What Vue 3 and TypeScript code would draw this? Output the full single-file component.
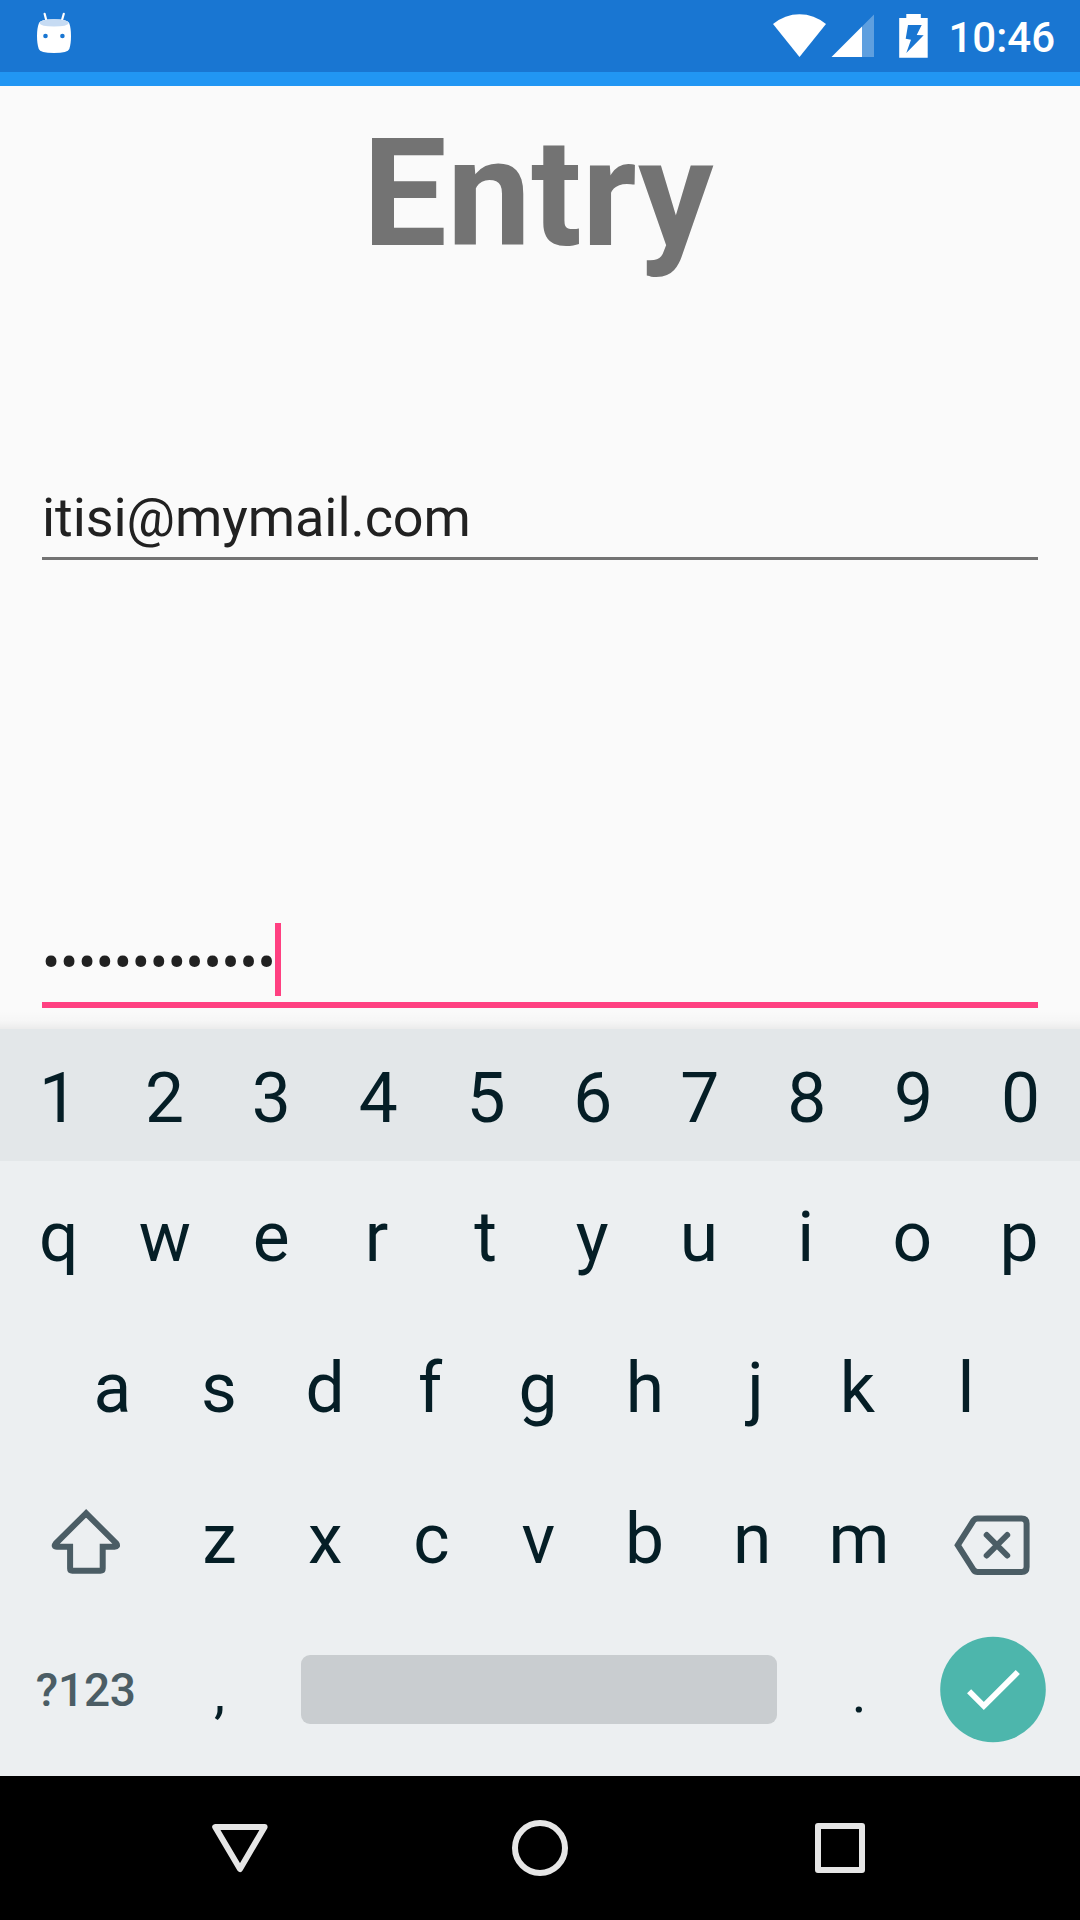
<script setup lang="ts">
const digits: string[] = [...'1234567890']
const topRow: string[] = [...'qwertyuiop']
const homeRow: string[] = [...'asdfghjkl']
const bottomRow: string[] = [...'zxcvbnm']
const email = 'itisi@mymail.com'
const masked: string = '•'.repeat(13)

const optical: Record<string, number> = {
  '2': -0.9, '3': -0.9, '4': -0.8,
  w: -0.7, e: -1, r: -2.3,
  d: -0.5, f: -2.2, g: -1.1, h: -1, j: 3.2, k: -1.7,
  x: -1, c: -1.5, v: -1.2, b: -1.7, n: -0.6, m: -0.6,
}

function labelStyle(label: string): { transform: string } | undefined {
  const dx = optical[label]
  return dx === undefined ? undefined : { transform: `translateX(${dx}px)` }
}
</script>

<template>
  <div class="screen">
    <header class="status">
      <svg class="droid" width="36" height="44" viewBox="36 12 36 44">
        <path d="M44.6 13.8L46.6 21.5M63.8 13.8L61.6 21.5" stroke="#fff" stroke-width="2.2" stroke-linecap="round" />
        <path d="M39 23Q40 19.2 54 19.2T69.200 23Q71 28 71 36Q71 44 69.300 49Q68 52.900 54 52.900T38.800 49Q37 44 37 36Q37 28 39 23Z" fill="#fff" />
        <path d="M39.300 23Q40.500 19.200 54 19.200T68.900 23Q67.500 26.500 54 26.500T39.300 23Z" fill="#c6dbf3" />
        <circle cx="45.500" cy="36" r="2.300" fill="#1976d2" />
        <circle cx="62.400" cy="36" r="2.300" fill="#1976d2" />
      </svg>
      <svg class="indicators" width="160" height="50" viewBox="770 10 160 50">
        <path d="M773 24Q785 14.200 799.500 14.200T826 24L799.500 57Z" fill="#fff" />
        <path d="M831.500 57L862 26.500V57Z" fill="#fff" />
        <path d="M862 26.500L874 14.500V57H862Z" fill="#fff" fill-opacity=".3" />
        <path fill-rule="evenodd" d="M906.300 14H920.800V18H927.700V57.700H899.200V18H906.300ZM908 25L905.700 38.700L911 39.700L906.300 53L923.700 35.300L916.700 35L921.700 25Z" fill="#fff" />
      </svg>
      <span class="clock">10:46</span>
    </header>
    <div class="action-strip"></div>

    <main class="content">
      <h1 class="title">Entry</h1>
      <div class="field email">{{ email }}</div>
      <div class="field password">
        <span class="dots">{{ masked }}</span><i class="caret"></i>
      </div>
      <div class="shade"></div>
    </main>

    <section class="keyboard">
      <div class="row numbers">
        <span v-for="k in digits" :key="k" class="key" :style="labelStyle(k)">{{ k }}</span>
      </div>
      <div class="row">
        <span v-for="k in topRow" :key="k" class="key" :style="labelStyle(k)">{{ k }}</span>
      </div>
      <div class="row home">
        <span v-for="k in homeRow" :key="k" class="key" :style="labelStyle(k)">{{ k }}</span>
      </div>
      <div class="row">
        <span class="key wide">
          <svg width="160" height="80" viewBox="6 1499 160 80" fill="none" stroke="#4b5d65" stroke-width="6">
            <path d="M86.100 1513.300L55.700 1543.500Q53.200 1546.700 57 1546.700H70.100V1568.500Q70.100 1570.700 72.300 1570.700H100.500Q102.700 1570.700 102.700 1568.500V1546.700H114.600Q118.400 1546.700 116.300 1543.500Z" />
          </svg>
        </span>
        <span v-for="k in bottomRow" :key="k" class="key" :style="labelStyle(k)">{{ k }}</span>
        <span class="key wide">
          <svg width="160" height="80" viewBox="913 1499 160 80" fill="none" stroke="#4b5d65" stroke-width="6">
            <path d="M957.800 1545.200L973.500 1520.500Q975 1518.400 977.500 1518.400H1021.600Q1026.600 1518.400 1026.600 1523.400V1566.900Q1026.600 1571.900 1021.600 1571.900H977.500Q975 1571.900 973.500 1569.900Z" />
            <path d="M986.700 1535L1007.200 1555.500M1007.200 1535L986.700 1555.500" stroke-linecap="round" />
          </svg>
        </span>
      </div>
      <div class="row last">
        <span class="key wide mode">?123</span>
        <span class="key mark">,</span>
        <span class="space"></span>
        <span class="key mark">.</span>
        <span class="key wide">
          <svg width="160" height="110" viewBox="913 1634.500 160 110">
            <circle cx="993" cy="1689" r="52.800" fill="#4db6ac" />
            <path d="M969.100 1690.800L983.800 1705.500L1017.800 1671.500" fill="none" stroke="#fff" stroke-width="5.800" />
          </svg>
        </span>
      </div>
    </section>

    <nav class="navbar">
      <svg width="60" height="60" viewBox="210 1818 60 60" fill="none" stroke="#e6e6e6" stroke-width="6" stroke-linejoin="round">
        <path d="M215.200 1827H264.600L240 1869Z" />
      </svg>
      <svg width="60" height="60" viewBox="510 1818 60 60" fill="none" stroke="#e6e6e6" stroke-width="6">
        <circle cx="540" cy="1848" r="25" />
      </svg>
      <svg width="60" height="60" viewBox="810 1818 60 60" fill="none" stroke="#e6e6e6" stroke-width="6" stroke-linejoin="round">
        <rect x="818" y="1826" width="44" height="44" />
      </svg>
    </nav>
  </div>
</template>

<style>
body {
  margin: 0;
}
</style>

<style scoped>
.screen {
  width: 1080px;
  height: 1920px;
  display: flex;
  flex-direction: column;
  overflow: hidden;
  background: #fafafa;
  font-family: Roboto, "Liberation Sans", sans-serif;
}

svg {
  display: block;
  flex: none;
}

.status {
  height: 72px;
  display: flex;
  align-items: flex-start;
  background: #1976d2;
  color: #fff;
}

.droid {
  margin: 12px 0 0 36px;
}

.indicators {
  margin: 10px 0 0 auto;
}

.clock {
  width: 150px;
  margin-top: 13px;
  padding-right: 25px;
  font-size: 42px;
  font-weight: 500;
  line-height: 49px;
  white-space: nowrap;
  text-align: right;
  box-sizing: border-box;
}

.action-strip {
  height: 14px;
  background: #2196f3;
}

.content {
  height: 943px;
  display: flex;
  flex-direction: column;
}

.title {
  margin: 20px 0 0;
  padding-right: 4px;
  height: 176px;
  font-size: 150px;
  line-height: 176px;
  font-weight: 700;
  color: #737373;
  text-align: center;
}

.field {
  margin: 0 42px;
  font-size: 54px;
  line-height: 63px;
  color: #212121;
  white-space: nowrap;
}

.email {
  margin-top: 204px;
  height: 71px;
  letter-spacing: -0.07px;
  border-bottom: 3px solid #737373;
}

.password {
  margin-top: 363px;
  height: 79px;
  border-bottom: 6px solid #ff4081;
  display: flex;
}

.dots {
  width: 233px;
  line-height: 79px;
  letter-spacing: -0.27px;
}

.caret {
  width: 6px;
  height: 73px;
  background: #ff4081;
}

.shade {
  margin-top: auto;
  height: 18px;
  background: linear-gradient(rgba(0, 0, 0, 0), rgba(0, 0, 0, 0.015) 55%, rgba(0, 0, 0, 0.06));
}

.keyboard {
  height: 747px;
  background: #eceff1;
  color: #051e26;
}

.row {
  height: 151px;
  padding: 0 5.5px;
  display: flex;
  align-items: center;
  box-sizing: border-box;
}

.numbers {
  height: 132px;
  padding: 5px 5px 0;
  background: #e3e7e9;
}

.home {
  padding: 0 59px;
}

.key {
  width: 106.7px;
  padding-top: 2px;
  flex: none;
  display: flex;
  justify-content: center;
  font-size: 69.5px;
  line-height: 82px;
}

.numbers .key {
  width: 106.9px;
}

.wide {
  width: 160.65px;
  padding-top: 0;
}

.mode {
  padding-top: 1px;
  font-size: 46px;
  font-weight: 500;
  letter-spacing: -0.2px;
  color: #4b5d65;
}

.mark {
  font-size: 56px;
  padding-top: 7px;
}

.space {
  width: 476px;
  height: 69px;
  margin: 0 28.500px;
  flex: none;
  border-radius: 9px;
  background: #c9cdd0;
}

.navbar {
  height: 144px;
  display: flex;
  align-items: center;
  justify-content: center;
  gap: 240px;
  background: #000;
}
</style>
